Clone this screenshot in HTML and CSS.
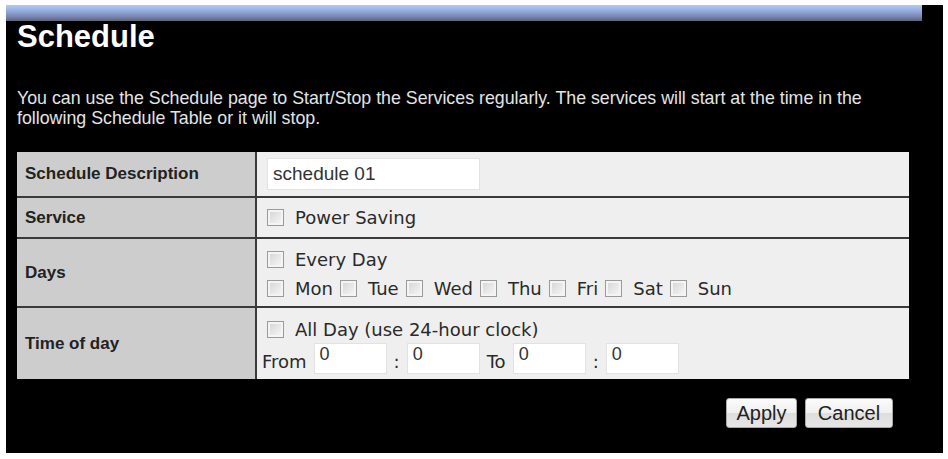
FILE: index.html
```html
<!DOCTYPE html>
<html>
<head>
<meta charset="utf-8">
<title>Schedule</title>
<link rel="stylesheet" href="styles.css">
</head>
<body>
<div class="panel">
  <div class="topbar"></div>
  <div class="content">
    <h1 class="title">Schedule</h1>
    <p class="intro">You can use the Schedule page to Start/Stop the Services regularly. The services will start at the time in the following Schedule Table or it will stop.</p>
    <div class="form">
      <div class="row row-desc">
        <div class="label">Schedule Description</div>
        <div class="value"><input class="text desc" type="text" value="schedule 01"></div>
      </div>
      <div class="row row-service">
        <div class="label">Service</div>
        <div class="value">
          <div class="line"><input class="cb" type="checkbox"><span class="opt">Power Saving</span></div>
        </div>
      </div>
      <div class="row row-days">
        <div class="label">Days</div>
        <div class="value">
          <div class="line"><input class="cb" type="checkbox"><span class="opt">Every Day</span></div>
          <div class="line">
            <input class="cb" type="checkbox"><span class="opt">Mon</span>
            <input class="cb" type="checkbox"><span class="opt">Tue</span>
            <input class="cb" type="checkbox"><span class="opt">Wed</span>
            <input class="cb" type="checkbox"><span class="opt">Thu</span>
            <input class="cb" type="checkbox"><span class="opt">Fri</span>
            <input class="cb" type="checkbox"><span class="opt">Sat</span>
            <input class="cb" type="checkbox"><span class="opt">Sun</span>
          </div>
        </div>
      </div>
      <div class="row row-time">
        <div class="label">Time of day</div>
        <div class="value">
          <div class="line line-all"><input class="cb" type="checkbox"><span class="opt">All Day (use 24-hour clock)</span></div>
          <div class="line line-range">
            <span class="word">From</span>
            <input class="text time" type="text" value="0">
            <span class="word">:</span>
            <input class="text time" type="text" value="0">
            <span class="word">To</span>
            <input class="text time" type="text" value="0">
            <span class="word">:</span>
            <input class="text time" type="text" value="0">
          </div>
        </div>
      </div>
    </div>
    <div class="actions">
      <button class="btn btn-apply" type="button">Apply</button>
      <button class="btn btn-cancel" type="button">Cancel</button>
    </div>
  </div>
</div>
</body>
</html>
```
FILE: styles.css
```css
html, body {
  margin: 0;
  padding: 0;
  background: #ffffff;
}

.panel {
  margin: 5px 0 0 6px;
  width: 937px;
  height: 448px;
  background: #000000;
  overflow: hidden;
}

.topbar {
  width: 916px;
  height: 16px;
  background: linear-gradient(to bottom, #b4caf2 0%, #93a9dc 40%, #7684b0 75%, #5e6272 100%);
}

.content {
  padding-left: 11px;
}

.title {
  margin: 0;
  font-family: "Liberation Sans", Arial, sans-serif;
  font-size: 31px;
  font-weight: bold;
  line-height: 32px;
  color: #ffffff;
}

.intro {
  margin: 35px 0 0 0;
  width: 892px;
  font-family: "Liberation Sans", Arial, sans-serif;
  font-size: 17.8px;
  line-height: 20px;
  color: #e4e4e4;
}

.form {
  margin-top: 24px;
  width: 892px;
  display: flex;
  flex-direction: column;
}

.row {
  display: flex;
  border-top: 2px solid #3a3a3a;
}

.row:first-child {
  border-top: none;
}

.row-desc { height: 44px; }
.row-service { height: 39px; }
.row-days { height: 67px; }
.row-time { height: 71px; }

.label {
  width: 230px;
  flex: none;
  padding-left: 8px;
  background: #cdcdcd;
  border-right: 2px solid #3a3a3a;
  display: flex;
  align-items: center;
  font-family: "Liberation Sans", Arial, sans-serif;
  font-size: 17px;
  font-weight: bold;
  color: #222222;
}

.value {
  flex: 1;
  background: #efefef;
  padding-left: 5px;
  display: flex;
  flex-direction: column;
  justify-content: center;
  font-family: "DejaVu Sans", Verdana, sans-serif;
  font-size: 18px;
  color: #2a2a2a;
}

.line {
  display: flex;
  align-items: center;
  height: 29px;
}

.row-days .value,
.row-time .value {
  padding-top: 3px;
}

.line-all {
  height: 26px;
}

.line-range {
  height: 32px;
  gap: 7px;
}

.word {
  align-self: flex-end;
  padding-bottom: 2px;
}

.cb {
  appearance: none;
  -webkit-appearance: none;
  width: 17px;
  height: 17px;
  margin: 0 11px 0 5px;
  box-sizing: border-box;
  border: 1px solid #9a9a9a;
  background: linear-gradient(135deg, #d2d2d2 0%, #e6e6e6 50%, #f8f8f8 100%);
  box-shadow: inset 0 0 0 2px #f4f4f4;
  flex: none;
}

.line .opt + .cb {
  margin-left: 7px;
}

.text {
  box-sizing: border-box;
  border: 1px solid #e2e2e2;
  background: #ffffff;
  font-family: "Liberation Sans", Arial, sans-serif;
  color: #333333;
  outline: none;
}

.desc {
  margin-left: 5px;
  width: 213px;
  height: 32px;
  padding: 0 5px;
  font-size: 19px;
}

.time {
  width: 73px;
  height: 31px;
  padding: 0 5px 8px 5px;
  font-size: 18px;
}

.actions {
  width: 892px;
  margin-top: 19px;
  display: flex;
  justify-content: flex-end;
  gap: 8px;
  padding-right: 16px;
  box-sizing: border-box;
}

.btn {
  height: 30px;
  padding: 0;
  border: 1px solid #a9a9a9;
  border-radius: 3px;
  background: linear-gradient(to bottom, #fbfbfb 0%, #f0f0f0 50%, #dedede 51%, #e6e6e6 100%);
  font-family: "Liberation Sans", Arial, sans-serif;
  font-size: 20px;
  color: #222222;
  text-align: center;
}

.btn-apply { width: 71px; }
.btn-cancel { width: 88px; }
```
